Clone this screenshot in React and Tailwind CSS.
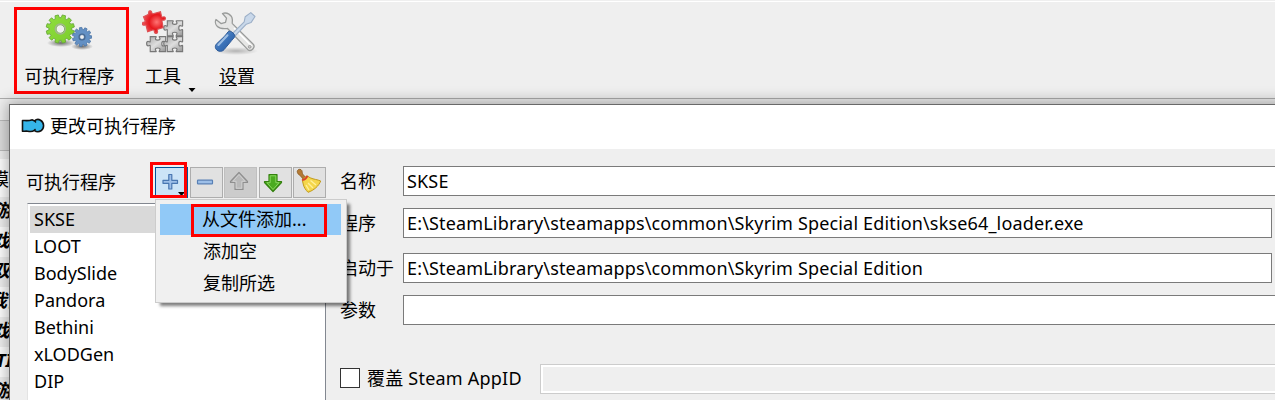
import React from "react";

function gearPath(cx, cy, outer, inner, hole, teeth, offset = 0) {
  const step = (Math.PI * 2) / teeth;
  const pt = (r, a) => `${(cx + r * Math.cos(a)).toFixed(2)} ${(cy + r * Math.sin(a)).toFixed(2)}`;
  const pts = [];
  for (let i = 0; i < teeth; i++) {
    const a = i * step + offset;
    pts.push(pt(inner, a - step * 0.34), pt(outer, a - step * 0.23), pt(outer, a + step * 0.23), pt(inner, a + step * 0.34));
  }
  return `M${pts.join("L")}ZM${cx - hole} ${cy}a${hole} ${hole} 0 1 0 ${hole * 2} 0a${hole} ${hole} 0 1 0 ${-hole * 2} 0Z`;
}

const PIECE =
  "M1 1H6.5C7.5 1 6 2.2 6 3.2C6 5 10.5 5 10.5 3.2C10.5 2.2 9 1 10 1H16V6C16 7 14.8 5.8 13.6 5.8C11.8 5.8 11.8 10.4 13.6 10.4C14.8 10.4 16 9.2 16 10.2V16H10C9 16 10.5 14.8 10.5 13.8C10.5 12 6 12 6 13.8C6 14.8 7.5 16 6.5 16H1V10.2C1 9.2 0 10.3 -1 10.3C-3 10.3 -3 5.7 -1 5.7C0 5.7 1 7 1 6Z";

function GearsIcon() {
  return (
    <svg width="52" height="40" viewBox="0 0 52 40" className="block">
      <defs>
        <linearGradient id="gg" x1="0" y1="0" x2="1" y2="1">
          <stop offset="0" stopColor="#8fdf3f" />
          <stop offset="1" stopColor="#7ccc2c" />
        </linearGradient>
        <radialGradient id="gs">
          <stop offset="0" stopColor="#000" stopOpacity=".55" />
          <stop offset="1" stopColor="#000" stopOpacity="0" />
        </radialGradient>
      </defs>
      <ellipse cx="17" cy="31" rx="14" ry="4" fill="url(#gs)" />
      <ellipse cx="38" cy="34.5" rx="11" ry="3.5" fill="url(#gs)" />
      <path d={gearPath(16.3, 17, 14.2, 11.4, 4.3, 12, 0.26)} fill="url(#gg)" stroke="#69a93a" strokeWidth=".9" fillRule="evenodd" />
      <circle cx="16.3" cy="17" r="5" fill="none" stroke="#a3b592" strokeWidth="1.4" />
      <path d={gearPath(38, 25, 9.6, 7.6, 2.4, 11)} fill="#6390c4" stroke="#4c75a5" strokeWidth=".8" fillRule="evenodd" />
      <circle cx="38" cy="25" r="3" fill="none" stroke="#46668e" strokeWidth="1.1" />
    </svg>
  );
}

function PuzzleIcon() {
  return (
    <svg width="46" height="46" viewBox="0 0 46 46" className="block">
      <defs>
        <linearGradient id="pg" x1="0" y1="0" x2="1" y2="1">
          <stop offset="0" stopColor="#a4a4a4" />
          <stop offset=".5" stopColor="#dedede" />
          <stop offset="1" stopColor="#969696" />
        </linearGradient>
        <radialGradient id="pr" cx=".62" cy=".5" r=".65">
          <stop offset="0" stopColor="#ff7474" />
          <stop offset=".5" stopColor="#e5171d" />
          <stop offset="1" stopColor="#f05b5f" />
        </radialGradient>
      </defs>
      <g fill="url(#pg)" stroke="#777" strokeWidth="1.1">
        <path d={PIECE} transform="translate(24.3 11.8) scale(1.02 1)" />
        <path d={PIECE} transform="translate(7.2 27.6) scale(1.03 1)" />
        <path d={PIECE} transform="translate(24.3 27.6) scale(1.02 1)" />
      </g>
      <path
        d="M4 9.5L8 7.5C9.5 7 9 6 9 5C9 3.3 11.5 3 12 5C12.3 6 12.5 7 14 6.3L20.5 4.5L21.5 9C21.8 10.5 23 9.4 24 9.5C26 9.8 25.5 12.4 24 12.7C23 13 21.6 12.2 22 14L23 20L18 21.5C16.5 22 18 23.3 17.6 24.5C17 26.4 14.4 25.6 14.5 24C14.5 23 14.5 22 13 22.4L8 24L6.5 18C6 16.7 5.2 18 4.2 17.7C2.2 17.3 2.6 14.8 4.4 14.7C5.5 14.6 6 14 5.4 13Z"
        transform="translate(-2.6 -1) scale(1.03)"
        fill="url(#pr)"
        stroke="#dd5155"
        strokeWidth="1.1"
      />
    </svg>
  );
}

function ToolsIcon() {
  return (
    <svg width="48" height="46" viewBox="0 0 48 46" className="block">
      <defs>
        <linearGradient id="th" x1="0" y1="0" x2="1" y2="1">
          <stop offset="0" stopColor="#7aa6d8" />
          <stop offset=".5" stopColor="#3c73b9" />
          <stop offset="1" stopColor="#24559c" />
        </linearGradient>
        <radialGradient id="ts">
          <stop offset="0" stopColor="#000" stopOpacity=".25" />
          <stop offset="1" stopColor="#000" stopOpacity="0" />
        </radialGradient>
      </defs>
      <ellipse cx="24" cy="41" rx="22" ry="4" fill="url(#ts)" />
      <path
        d="M10.5 3.5C15 1.8 20 5 20.3 9.3C20.5 11.2 20 13 20.4 13.6L41 34C44 37 39.3 42.6 35.6 39.4L15.5 18.5C13 18.7 8.5 19.4 5.4 16.5C3.2 14.5 3 11.3 4 9.5L9 13.6L13.5 12.3L14.5 8.2Z"
        fill="#e6e6e5"
        stroke="#999b9a"
        strokeWidth="1.3"
        strokeLinejoin="round"
      />
      <path d="M22 18L39.5 36" stroke="#fff" strokeWidth="1.5" />
      <circle cx="37.7" cy="36.8" r="1.4" fill="#c9c9c9" stroke="#888" strokeWidth=".7" />
      <path d="M20.5 23.5L32.2 11.8L33.2 6.7L38.8 2.6L43 6.5L39 12.6L34.3 14.2L23 26Z" fill="#c9d8ea" stroke="#9db0c8" strokeWidth="1.1" strokeLinejoin="round" />
      <path d="M16.2 21.7C18.6 19.6 24.3 24.8 22.3 27.5C21.5 28.7 20.1 29.5 19.6 30.6L12 39.7C8 44 .8 39 4.2 34.2L12.3 26.5C14 25 14.9 23 16.2 21.7Z" fill="url(#th)" stroke="#2d5a98" strokeWidth="1" />
      <path d="M15.5 25.2L6.4 35" stroke="#9ebfe4" strokeWidth="2" strokeLinecap="round" />
    </svg>
  );
}

function BroomIcon() {
  return (
    <svg width="27" height="27" viewBox="0 0 27 27" className="block">
      <path d="M1.5 2.5C2.5.8 5 1 5.8 2.5C6.5 4 6 5 7 6.4L9.5 9.3L7.2 11.2L4.8 8.2C3.8 7 2.7 7 1.8 5.4C1.3 4.5 1 3.5 1.5 2.5Z" fill="#b47a35" stroke="#875821" strokeWidth=".8" />
      <path d="M6.2 11.5L11 7.8L14.2 9.8C18 11.5 21.5 11.5 24.7 13C22.8 18 18 22.3 12 24.3C9.8 22 7.8 19.4 7.2 16Z" fill="#f4d64b" stroke="#c29b1c" strokeWidth="1" strokeLinejoin="round" />
      <path d="M12 15L17 20M14.5 12.5L20 17M10 17L13 22" stroke="#fff09a" strokeWidth="1.4" />
      <path d="M6.2 12.2C8.3 11.7 10.7 9.8 11.5 7.8" fill="none" stroke="#d9432c" strokeWidth="1.8" />
    </svg>
  );
}

function IconButton({ className, children }) {
  return <div className={`flex h-[31px] w-[33px] shrink-0 items-center justify-center border ${className}`}>{children}</div>;
}

function ArrowGlyph({ down }) {
  return (
    <svg width="20" height="22" viewBox="0 0 20 22" className={down ? "block rotate-180" : "-mt-0.5 -ml-1 block"}>
      <path
        d="M10 1.5L18.5 10.5V11.5H14V18.5H6V11.5H1.5V10.5Z"
        fill={down ? "#4bab20" : "#b9b9b9"}
        stroke={down ? "#35810f" : "#8f8f8f"}
        strokeWidth="1.2"
        strokeLinejoin="round"
      />
      <path d="M10 3.5L16 10.3H12.8V17.2H7.2V10.3H4Z" fill="none" stroke={down ? "#87d65c" : "#d0d0d0"} strokeWidth="1" />
    </svg>
  );
}

const programs = ["SKSE", "LOOT", "BodySlide", "Pandora", "Bethini", "xLODGen", "DIP"];
const modRows = [
  { name: "游戏", shift: "-ml-[6px]" },
  { name: "戏", shift: "-ml-[8px]" },
  { name: "双", shift: "-ml-[8px]" },
  { name: "我们", shift: "-ml-[11px]" },
  { name: "戏", shift: "-ml-[8px]" },
  { name: "TI", shift: "-ml-[4px]" },
  { name: "游戏", shift: "-ml-[6px]" },
];

function Field({ label, children, className = "", box = "" }) {
  return (
    <div className={`flex h-[30px] items-center ${className}`}>
      <span className="w-[63px] shrink-0 pb-px">{label}</span>
      <div className={`flex h-[30px] items-center border border-[#7a7a7a] bg-white pl-[3px] tracking-[0.16px] whitespace-nowrap ${box}`}>{children}</div>
    </div>
  );
}

function AddMenu() {
  return (
    <div className="absolute left-[145px] top-[94px] z-20 h-[104px] w-[192px] border border-[#ccc] bg-[#f0f0f0] p-1 shadow-[4px_4px_3px_-1px_rgba(0,0,0,0.5)]">
      <div className="flex h-[31px] w-[181px] items-center bg-[#91c9f7] pl-[42px] pb-px">从文件添加...</div>
      <div className="flex h-[32px] items-center pl-[43px]">添加空</div>
      <div className="flex h-[31px] items-center pl-[43px]">复制所选</div>
      <div className="absolute left-[35px] top-[4px] h-[33px] w-[136px] border-[3px] border-[#f00]" />
    </div>
  );
}

function Dialog() {
  return (
    <div className="absolute left-[9px] top-[104px] z-10 h-[310px] w-[1290px] border border-[#696969] bg-[#efefef] shadow-[0_0_14px_2px_rgba(0,0,0,0.32)]">
      <div className="flex h-11 items-center bg-white pl-[11px] pb-0.5">
        <svg width="24" height="16" viewBox="0 0 24 16" className="mr-[5px]">
          <path d="M1.5 2.5C4 2.5 8 3 10.5 2C12 1.4 12.5 3 13.5 2.8C15 1.5 17.5 1 19.5 2.2C23.5 4.5 23.5 10.5 20 12.8C17.5 14.3 15 13.7 13.3 12.4C11 14.2 8.5 13.6 6.5 13.2C4.5 12.8 3 13.6 1.5 13.2Z" fill="#35b5ea" stroke="#111" strokeWidth="1.6" strokeLinejoin="round" />
          <path d="M13.5 2.8L15 4.5M13.3 12.4L14.5 11" stroke="#111" strokeWidth="1.3" />
        </svg>
        <span>更改可执行程序</span>
      </div>
      <div className="flex">
        <div className="w-[316px] shrink-0 pl-[17px] pt-[18px]">
          <div className="flex h-[31px]">
            <span className="-ml-px w-[129px] shrink-0 pt-0.5">可执行程序</span>
            <div className="flex gap-[1.5px]">
              <IconButton className="border-[#005499] bg-[#cce4f7]">
                <svg width="31" height="29" viewBox="0 0 31 29">
                  <path d="M12.8 6.5H15.8V12.3H21.5V15.3H15.8V21H12.8V15.3H7V12.3H12.8Z" fill="#9dbfe8" stroke="#4977b1" strokeWidth="1.2" strokeLinejoin="round" />
                  <path d="M22 24H29L25.5 28Z" fill="#000" />
                </svg>
              </IconButton>
              <IconButton className="border-[#adadad] bg-[#e1e1e1]">
                <svg width="18" height="6" viewBox="0 0 18 6" className="-mt-0.5 -ml-0.5">
                  <rect x="1.5" y="1.2" width="15" height="3.6" rx=".6" fill="#9dbfe8" stroke="#5880b5" strokeWidth="1.2" />
                </svg>
              </IconButton>
              <IconButton className="border-[#bfbfbf] bg-[#ccc]"><ArrowGlyph /></IconButton>
              <IconButton className="border-[#adadad] bg-[#e1e1e1] pr-1 pb-0.5"><ArrowGlyph down /></IconButton>
              <IconButton className="border-[#adadad] bg-[#e1e1e1] pb-0.5"><BroomIcon /></IconButton>
            </div>
          </div>
          <div className="mt-[5px] h-[220px] border border-[#828790] border-l-[#e3e3e3] bg-white p-0.5">
            {programs.map((name, i) => (
              <div key={name} className={`flex h-[27px] items-center pb-0.5 pl-1 ${i === 0 ? "bg-[#d9d9d9]" : ""}`}>{name}</div>
            ))}
          </div>
        </div>
        <div className="min-w-0 flex-1 pl-[14px] pt-[17px]">
          <Field label="名称" box="w-[900px]"><span>SKSE</span></Field>
          <Field label="程序" className="mt-3" box="w-[869px]">E:\SteamLibrary\steamapps\common\Skyrim Special Edition\skse64_loader.exe</Field>
          <Field label="启动于" className="mt-[15px]" box="w-[869px]">E:\SteamLibrary\steamapps\common\Skyrim Special Edition</Field>
          <Field label="参数" className="mt-3" box="w-[900px]" />
          <div className="mt-[39px] flex h-[30px] items-center">
            <div className="-mt-0.5 size-5 shrink-0 border border-[#333] bg-white" />
            <span className="ml-[7px] w-[173px] shrink-0 pb-0.5 tracking-[0.22px] whitespace-nowrap">覆盖 Steam AppID</span>
            <div className="h-[30px] w-[800px] shrink-0 border border-[#ccc] bg-[#efefef] shadow-[inset_0_0_0_2px_#fff]" />
          </div>
        </div>
      </div>
      <AddMenu />
      <div className="absolute left-[140px] top-[57px] z-30 h-[36px] w-[37px] border-[3px] border-[#f00]" />
    </div>
  );
}

export default function App() {
  return (
    <div className="relative h-[400px] w-full overflow-hidden bg-[#efefef] font-['Noto_Sans','Noto_Sans_CJK_SC',sans-serif] text-[18px] leading-[26px] text-black">
      <div className="h-[99px] border-b border-[#adadad] pt-px">
        <div className="flex h-[97px] border-t border-white pl-[14px] pt-[5px]">
          <div className="flex h-[87px] w-[115px] flex-col items-center border-[3px] border-[#f00]">
            <div className="mt-0.5 -ml-1"><GearsIcon /></div>
            <span className="mt-[11px] -ml-1">可执行程序</span>
          </div>
          <div className="ml-[10px] flex w-[58px] flex-col pl-[3px] pt-[1px]">
            <PuzzleIcon />
            <span className="mt-[9px] ml-[3px] whitespace-nowrap">工具</span>
          </div>
          <svg width="8" height="4" viewBox="0 0 8 4" className="-ml-[9px] mt-[81px]"><path d="M.5 0H7.5L4 4Z" /></svg>
          <div className="ml-[16px] flex w-[60px] flex-col pt-[3px]">
            <ToolsIcon />
            <span className="mt-[7px] ml-[7px] whitespace-nowrap"><u className="decoration-1 underline-offset-2">设</u>置</span>
          </div>
        </div>
      </div>
      <div className="h-[22px] border-b border-[#bcbcbc]" />
      <div className="h-[30px] border-b border-[#bcbcbc] bg-[#dedede]" />
      <div className="h-[8px]" />
      <div className="w-[30px] whitespace-nowrap">
        <div className="h-[38px] bg-white pt-[7px]"><span className="-ml-[9px]">模</span></div>
        {modRows.map(({ name, shift }, i) => (
          <div key={i} className={`h-[30px] font-bold italic ${i % 2 ? "bg-white" : "bg-[#f0f0f0]"}`}>
            <span className={shift}>{name}</span>
          </div>
        ))}
      </div>
      <Dialog />
    </div>
  );
}
